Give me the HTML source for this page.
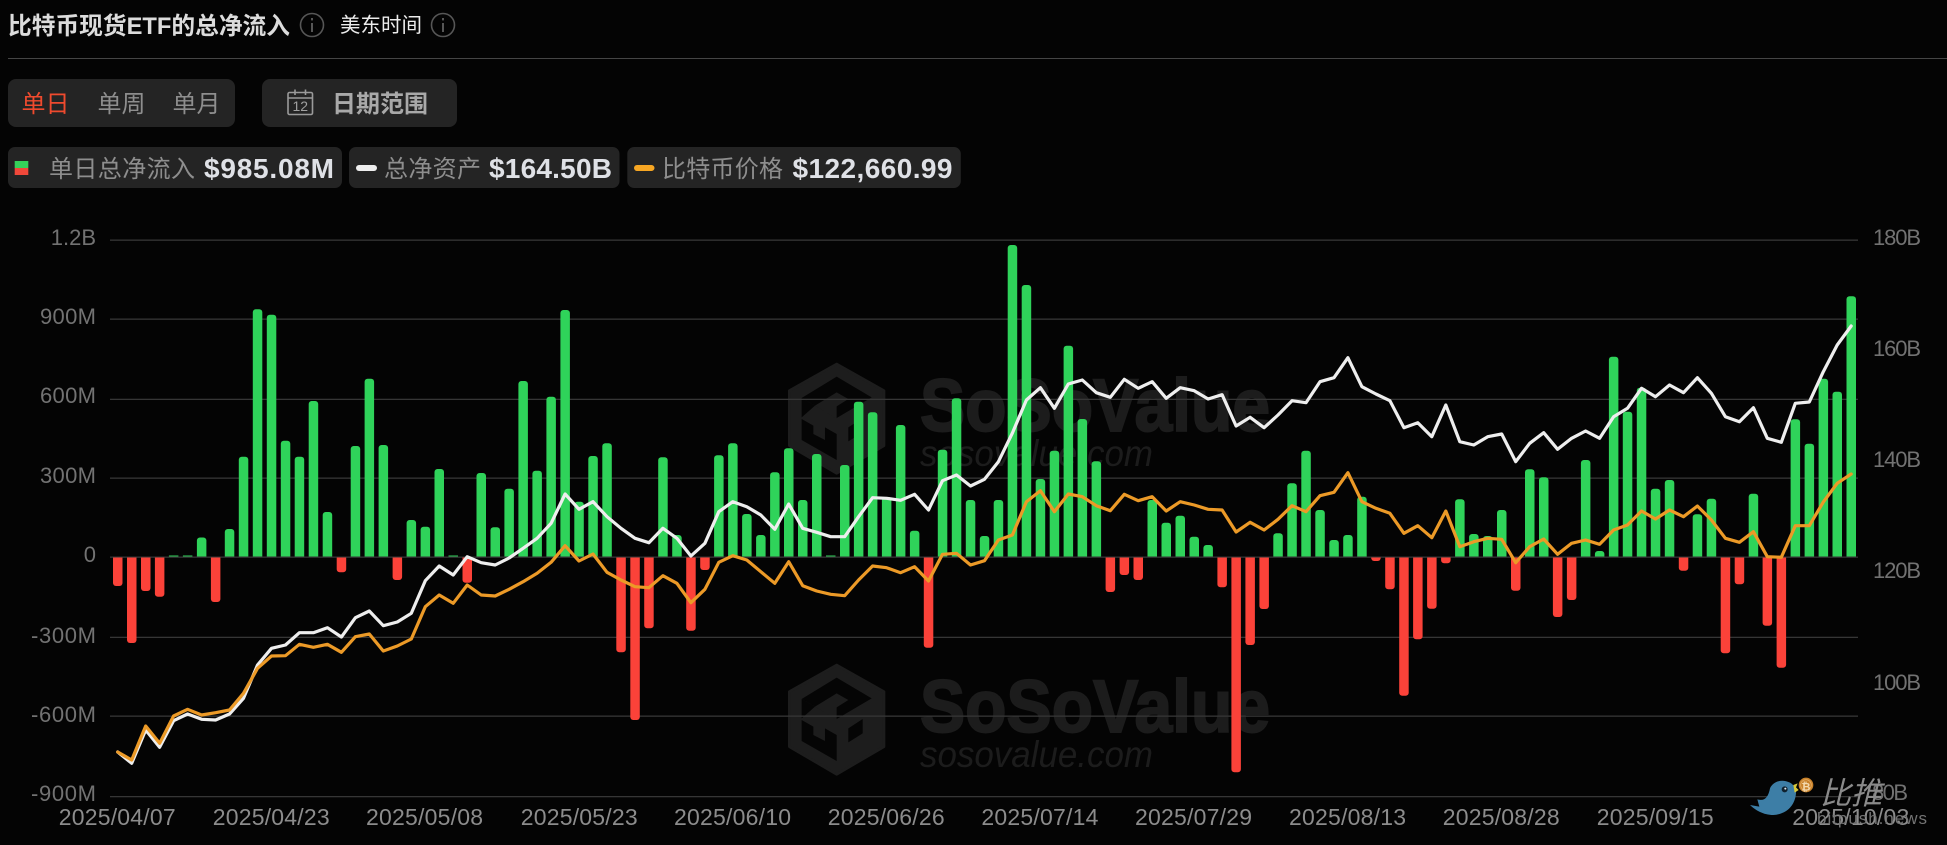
<!DOCTYPE html>
<html lang="zh">
<head>
<meta charset="utf-8">
<title>比特币现货ETF的总净流入</title>
<style>
html,body{margin:0;padding:0;background:#040404;width:1947px;height:845px;overflow:hidden}
svg{display:block}
text{font-family:"Liberation Sans","Noto Sans CJK SC",sans-serif}
.ax{fill:#727272;font-size:22px}
.dt{fill:#8c8c8c;font-size:23px}
.lb{fill:#8e8e8e;font-size:24px}
.val{fill:#dfe1e6;font-size:28px;font-weight:700}
</style>
</head>
<body>
<svg width="1947" height="845" viewBox="0 0 1947 845" xmlns="http://www.w3.org/2000/svg">
<defs>
<clipPath id="cg"><rect x="0" y="0" width="1947" height="556.5"/></clipPath>
<clipPath id="cr"><rect x="0" y="557.5" width="1947" height="290"/></clipPath>
<g id="wm">
<polygon points="170,30 312,110 312,275 170,358 28,275 28,110" fill="#1d1d1d" stroke="#1d1d1d" stroke-width="8" stroke-linejoin="round"/>
<polygon points="170,68 275,130 170,192 65,132" fill="#050505"/>
<polygon points="65,132 105,155 65,190" fill="#050505"/>
<polygon points="105,155 170,115 205,135 170,157 170,195" fill="#1d1d1d"/>
<polygon points="65,195 100,215 100,240 135,258 135,220 170,240 170,318 65,258" fill="#050505"/>
<polygon points="205,220 248,192 248,235 205,262" fill="#050505"/>
</g>
</defs>

<!-- header -->
<text x="8" y="34" font-size="24" font-weight="700" fill="#dcdcdc" textLength="282" lengthAdjust="spacingAndGlyphs">比特币现货ETF的总净流入</text>
<circle cx="312" cy="25" r="11.5" fill="none" stroke="#565656" stroke-width="1.6"/>
<rect x="311" y="23" width="2" height="9" fill="#565656"/><rect x="311" y="18" width="2" height="2.4" fill="#565656"/>
<text x="340" y="32" font-size="20.5" fill="#ececec">美东时间</text>
<circle cx="443" cy="25" r="11.5" fill="none" stroke="#565656" stroke-width="1.6"/>
<rect x="442" y="23" width="2" height="9" fill="#565656"/><rect x="442" y="18" width="2" height="2.4" fill="#565656"/>
<rect x="8" y="58" width="1939" height="1" fill="#454545"/>

<!-- tabs -->
<rect x="8" y="79" width="227" height="48" rx="8" fill="#242424"/>
<text x="21.5" y="112" font-size="24" fill="#ef4a2e">单日</text>
<text x="97.500" y="112" font-size="24" fill="#8e8e8e">单周</text>
<text x="172.500" y="112" font-size="24" fill="#8e8e8e">单月</text>
<rect x="262" y="79" width="195" height="48" rx="8" fill="#242424"/>
<rect x="288" y="92.500" width="24.500" height="22" rx="1.500" fill="none" stroke="#9a9a9a" stroke-width="1.600"/>
<path d="M288 98H312.500M295 89.500V95M305.500 89.500V95" fill="none" stroke="#9a9a9a" stroke-width="1.600"/>
<text x="300.300" y="111" font-size="14" fill="#a0a0a0" text-anchor="middle">12</text>
<text x="332" y="112" font-size="24" font-weight="700" fill="#a9a9a9">日期范围</text>

<!-- legend -->
<rect x="8" y="147" width="334" height="41" rx="7" fill="#242424"/>
<rect x="14.700" y="161" width="13.600" height="7" fill="#35d15a"/><rect x="14.700" y="168" width="13.600" height="7" fill="#f0483a"/>
<text class="lb" x="49" y="177" textLength="146">单日总净流入</text>
<text class="val" x="204" y="178" textLength="130" lengthAdjust="spacing">$985.08M</text>
<rect x="349" y="147" width="270.500" height="41" rx="7" fill="#242424"/>
<rect x="356" y="165" width="21" height="6" rx="3" fill="#eeeeee"/>
<text class="lb" x="384" y="177" textLength="97">总净资产</text>
<text class="val" x="489" y="178" textLength="123" lengthAdjust="spacing">$164.50B</text>
<rect x="627.300" y="147" width="333.500" height="41" rx="7" fill="#242424"/>
<rect x="634" y="165" width="20.500" height="6" rx="3" fill="#f6a623"/>
<text class="lb" x="662" y="177" textLength="121">比特币价格</text>
<text class="val" x="792.500" y="178" textLength="160" lengthAdjust="spacing">$122,660.99</text>

<!-- watermark -->
<use href="#wm" transform="translate(780,354) scale(.33333)"/>
<use href="#wm" transform="translate(780,655) scale(.33333)"/>
<g fill="#1c1c1c" stroke="#1c1c1c">
<text x="920" y="431" font-size="74" font-weight="700" stroke-width="2" textLength="350" lengthAdjust="spacingAndGlyphs">SoSoValue</text>
<text x="920" y="466" font-size="37" font-style="italic" stroke-width="0" textLength="233" lengthAdjust="spacingAndGlyphs">sosovalue.com</text>
<text x="920" y="732" font-size="74" font-weight="700" stroke-width="2" textLength="350" lengthAdjust="spacingAndGlyphs">SoSoValue</text>
<text x="920" y="767" font-size="37" font-style="italic" stroke-width="0" textLength="233" lengthAdjust="spacingAndGlyphs">sosovalue.com</text>
</g>

<!-- grid -->
<g fill="#363636">
<rect x="110" y="239.500" width="1748" height="1.300"/>
<rect x="110" y="318.500" width="1748" height="1.300"/>
<rect x="110" y="398.700" width="1748" height="1.300"/>
<rect x="110" y="477.500" width="1748" height="1.300"/>
<rect x="110" y="556.500" width="1748" height="1.300"/>
<rect x="110" y="636.700" width="1748" height="1.300"/>
<rect x="110" y="715.500" width="1748" height="1.300"/>
<rect x="110" y="796" width="1748" height="1.300"/>
</g>

<!-- y axes -->
<g class="ax" text-anchor="end">
<text x="96" y="245">1.2B</text>
<text x="96" y="324" textLength="56">900M</text>
<text x="96" y="403" textLength="56">600M</text>
<text x="96" y="483" textLength="56">300M</text>
<text x="96" y="562">0</text>
<text x="96" y="643" textLength="65">-300M</text>
<text x="96" y="722" textLength="65">-600M</text>
<text x="96" y="801" textLength="65">-900M</text>
</g>
<g class="ax">
<text x="1873" y="245" textLength="48">180B</text>
<text x="1873" y="356" textLength="48">160B</text>
<text x="1873" y="467" textLength="48">140B</text>
<text x="1873" y="578" textLength="48">120B</text>
<text x="1873" y="690" textLength="48">100B</text>
<text x="1872" y="800" textLength="36">80B</text>
</g>

<!-- x axis -->
<g class="dt">
<text x="58.700" y="825" textLength="117">2025/04/07</text>
<text x="212.700" y="825" textLength="117">2025/04/23</text>
<text x="366" y="825" textLength="117">2025/05/08</text>
<text x="520.700" y="825" textLength="117">2025/05/23</text>
<text x="674" y="825" textLength="117">2025/06/10</text>
<text x="827.700" y="825" textLength="117">2025/06/26</text>
<text x="981.400" y="825" textLength="117">2025/07/14</text>
<text x="1135" y="825" textLength="117">2025/07/29</text>
<text x="1289" y="825" textLength="117">2025/08/13</text>
<text x="1442.700" y="825" textLength="117">2025/08/28</text>
<text x="1596.700" y="825" textLength="117">2025/09/15</text>
<text x="1792.300" y="825" textLength="117">2025/10/03</text>
</g>

<!-- green bars -->
<g fill="#2fd35a" clip-path="url(#cg)">
<rect x="168.900" y="555.500" width="9.500" height="5.500"/>
<rect x="182.900" y="555.500" width="9.500" height="5.500"/>
<rect x="196.900" y="537.500" width="9.500" height="23.500" rx="3"/>
<rect x="224.800" y="529" width="9.500" height="32" rx="3"/>
<rect x="238.800" y="456.700" width="9.500" height="104.300" rx="3"/>
<rect x="252.800" y="309.300" width="9.500" height="251.700" rx="3"/>
<rect x="266.800" y="314.700" width="9.500" height="246.300" rx="3"/>
<rect x="280.800" y="440.700" width="9.500" height="120.300" rx="3"/>
<rect x="294.700" y="456.700" width="9.500" height="104.300" rx="3"/>
<rect x="308.700" y="401" width="9.500" height="160" rx="3"/>
<rect x="322.700" y="512" width="9.500" height="49" rx="3"/>
<rect x="350.700" y="446" width="9.500" height="115" rx="3"/>
<rect x="364.600" y="378.700" width="9.500" height="182.300" rx="3"/>
<rect x="378.600" y="445" width="9.500" height="116" rx="3"/>
<rect x="406.600" y="520" width="9.500" height="41" rx="3"/>
<rect x="420.600" y="526.700" width="9.500" height="34.300" rx="3"/>
<rect x="434.500" y="469" width="9.500" height="92" rx="3"/>
<rect x="448.500" y="555.500" width="9.500" height="5.500"/>
<rect x="476.500" y="473" width="9.500" height="88" rx="3"/>
<rect x="490.500" y="527.300" width="9.500" height="33.700" rx="3"/>
<rect x="504.400" y="488.700" width="9.500" height="72.300" rx="3"/>
<rect x="518.400" y="381" width="9.500" height="180" rx="3"/>
<rect x="532.400" y="470.700" width="9.500" height="90.300" rx="3"/>
<rect x="546.400" y="396.700" width="9.500" height="164.300" rx="3"/>
<rect x="560.400" y="310" width="9.500" height="251" rx="3"/>
<rect x="574.300" y="501.700" width="9.500" height="59.300" rx="3"/>
<rect x="588.300" y="456" width="9.500" height="105" rx="3"/>
<rect x="602.300" y="443.300" width="9.500" height="117.700" rx="3"/>
<rect x="658.200" y="457.300" width="9.500" height="103.700" rx="3"/>
<rect x="672.200" y="535" width="9.500" height="26" rx="3"/>
<rect x="714.100" y="455.300" width="9.500" height="105.700" rx="3"/>
<rect x="728.100" y="443.300" width="9.500" height="117.700" rx="3"/>
<rect x="742.100" y="514" width="9.500" height="47" rx="3"/>
<rect x="756.100" y="535" width="9.500" height="26" rx="3"/>
<rect x="770.100" y="472.300" width="9.500" height="88.700" rx="3"/>
<rect x="784" y="448.300" width="9.500" height="112.700" rx="3"/>
<rect x="798" y="500" width="9.500" height="61" rx="3"/>
<rect x="812" y="454" width="9.500" height="107" rx="3"/>
<rect x="826" y="555.500" width="9.500" height="5.500"/>
<rect x="840" y="465" width="9.500" height="96" rx="3"/>
<rect x="853.900" y="401.700" width="9.500" height="159.300" rx="3"/>
<rect x="867.900" y="412.300" width="9.500" height="148.700" rx="3"/>
<rect x="881.900" y="497" width="9.500" height="64" rx="3"/>
<rect x="895.900" y="425" width="9.500" height="136" rx="3"/>
<rect x="909.900" y="530.700" width="9.500" height="30.300" rx="3"/>
<rect x="937.800" y="449.700" width="9.500" height="111.300" rx="3"/>
<rect x="951.800" y="398.300" width="9.500" height="162.700" rx="3"/>
<rect x="965.800" y="500" width="9.500" height="61" rx="3"/>
<rect x="979.800" y="536" width="9.500" height="25" rx="3"/>
<rect x="993.700" y="500" width="9.500" height="61" rx="3"/>
<rect x="1007.700" y="245" width="9.500" height="316" rx="3"/>
<rect x="1021.700" y="285" width="9.500" height="276" rx="3"/>
<rect x="1035.700" y="479" width="9.500" height="82" rx="3"/>
<rect x="1049.700" y="450.700" width="9.500" height="110.300" rx="3"/>
<rect x="1063.600" y="345.700" width="9.500" height="215.300" rx="3"/>
<rect x="1077.600" y="419" width="9.500" height="142" rx="3"/>
<rect x="1091.600" y="461.300" width="9.500" height="99.700" rx="3"/>
<rect x="1147.500" y="500" width="9.500" height="61" rx="3"/>
<rect x="1161.500" y="522.700" width="9.500" height="38.300" rx="3"/>
<rect x="1175.500" y="515.700" width="9.500" height="45.300" rx="3"/>
<rect x="1189.500" y="536.700" width="9.500" height="24.300" rx="3"/>
<rect x="1203.400" y="545" width="9.500" height="16" rx="3"/>
<rect x="1273.300" y="533.300" width="9.500" height="27.700" rx="3"/>
<rect x="1287.300" y="483.300" width="9.500" height="77.700" rx="3"/>
<rect x="1301.300" y="450.700" width="9.500" height="110.300" rx="3"/>
<rect x="1315.300" y="510" width="9.500" height="51" rx="3"/>
<rect x="1329.300" y="540" width="9.500" height="21" rx="3"/>
<rect x="1343.200" y="535" width="9.500" height="26" rx="3"/>
<rect x="1357.200" y="496.700" width="9.500" height="64.300" rx="3"/>
<rect x="1455.100" y="499.300" width="9.500" height="61.700" rx="3"/>
<rect x="1469.100" y="534" width="9.500" height="27" rx="3"/>
<rect x="1483" y="536" width="9.500" height="25" rx="3"/>
<rect x="1497" y="510" width="9.500" height="51" rx="3"/>
<rect x="1525" y="469.300" width="9.500" height="91.700" rx="3"/>
<rect x="1539" y="477.300" width="9.500" height="83.700" rx="3"/>
<rect x="1580.900" y="460" width="9.500" height="101" rx="3"/>
<rect x="1594.900" y="551" width="9.500" height="10" rx="3"/>
<rect x="1608.900" y="356.700" width="9.500" height="204.300" rx="3"/>
<rect x="1622.800" y="411.700" width="9.500" height="149.300" rx="3"/>
<rect x="1636.800" y="387.700" width="9.500" height="173.300" rx="3"/>
<rect x="1650.800" y="488.700" width="9.500" height="72.300" rx="3"/>
<rect x="1664.800" y="480" width="9.500" height="81" rx="3"/>
<rect x="1692.700" y="514.300" width="9.500" height="46.700" rx="3"/>
<rect x="1706.700" y="498.700" width="9.500" height="62.300" rx="3"/>
<rect x="1748.700" y="493.700" width="9.500" height="67.300" rx="3"/>
<rect x="1790.600" y="419.300" width="9.500" height="141.700" rx="3"/>
<rect x="1804.600" y="443.700" width="9.500" height="117.300" rx="3"/>
<rect x="1818.600" y="378.700" width="9.500" height="182.300" rx="3"/>
<rect x="1832.500" y="391.700" width="9.500" height="169.300" rx="3"/>
<rect x="1846.500" y="296.300" width="9.500" height="264.700" rx="3"/>
</g>

<!-- red bars -->
<g fill="#fb4239" clip-path="url(#cr)">
<rect x="113" y="553" width="9.500" height="33" rx="3"/>
<rect x="127" y="553" width="9.500" height="90" rx="3"/>
<rect x="141" y="553" width="9.500" height="38" rx="3"/>
<rect x="154.900" y="553" width="9.500" height="43.700" rx="3"/>
<rect x="210.900" y="553" width="9.500" height="49" rx="3"/>
<rect x="336.700" y="553" width="9.500" height="19.300" rx="3"/>
<rect x="392.600" y="553" width="9.500" height="27" rx="3"/>
<rect x="462.500" y="553" width="9.500" height="29.700" rx="3"/>
<rect x="616.300" y="553" width="9.500" height="99.300" rx="3"/>
<rect x="630.300" y="553" width="9.500" height="167" rx="3"/>
<rect x="644.200" y="553" width="9.500" height="75.300" rx="3"/>
<rect x="686.200" y="553" width="9.500" height="77.700" rx="3"/>
<rect x="700.200" y="553" width="9.500" height="17" rx="3"/>
<rect x="923.800" y="553" width="9.500" height="94.700" rx="3"/>
<rect x="1105.600" y="553" width="9.500" height="39" rx="3"/>
<rect x="1119.600" y="553" width="9.500" height="22" rx="3"/>
<rect x="1133.500" y="553" width="9.500" height="27" rx="3"/>
<rect x="1217.400" y="553" width="9.500" height="34.300" rx="3"/>
<rect x="1231.400" y="553" width="9.500" height="219.300" rx="3"/>
<rect x="1245.400" y="553" width="9.500" height="92" rx="3"/>
<rect x="1259.400" y="553" width="9.500" height="56" rx="3"/>
<rect x="1371.200" y="553" width="9.500" height="8" rx="3"/>
<rect x="1385.200" y="553" width="9.500" height="36.300" rx="3"/>
<rect x="1399.200" y="553" width="9.500" height="142.700" rx="3"/>
<rect x="1413.100" y="553" width="9.500" height="86.300" rx="3"/>
<rect x="1427.100" y="553" width="9.500" height="55.700" rx="3"/>
<rect x="1441.100" y="553" width="9.500" height="10.300" rx="3"/>
<rect x="1511" y="553" width="9.500" height="37.700" rx="3"/>
<rect x="1552.900" y="553" width="9.500" height="64" rx="3"/>
<rect x="1566.900" y="553" width="9.500" height="47" rx="3"/>
<rect x="1678.800" y="553" width="9.500" height="17.700" rx="3"/>
<rect x="1720.700" y="553" width="9.500" height="100.300" rx="3"/>
<rect x="1734.700" y="553" width="9.500" height="31.300" rx="3"/>
<rect x="1762.600" y="553" width="9.500" height="72.700" rx="3"/>
<rect x="1776.600" y="553" width="9.500" height="114.700" rx="3"/>
</g>

<!-- total net assets -->
<polyline fill="none" stroke="#eeeeee" stroke-width="3.200" stroke-linejoin="round" stroke-linecap="round" points="117.700,752 131.700,763.300 145.700,730 159.600,747.300 173.600,720.700 187.600,714 201.600,719.300 215.600,720 229.500,714 243.500,698.300 257.500,665 271.500,648.300 285.500,645 299.400,632.700 313.400,632.700 327.400,627.700 341.400,637 355.400,617.700 369.300,611 383.300,625.700 397.300,622 411.300,613.300 425.300,580.700 439.200,566 453.200,575 467.200,556.700 481.200,562.700 495.200,565 509.100,558 523.100,548.300 537.100,538.300 551.100,523.300 565.100,494 579,509.300 593,501.700 607,516.700 621,528.300 635,538.300 648.900,542.700 662.900,528.300 676.900,538.300 690.900,556 704.900,543.300 718.800,511.700 732.800,501.700 746.800,506.700 760.800,515 774.800,529.300 788.700,504 802.700,528.300 816.700,532.300 830.700,536.700 844.700,536.700 858.600,516.700 872.600,497.700 886.600,498.300 900.600,500.300 914.600,494.300 928.500,510 942.500,480.700 956.500,475 970.500,486 984.500,479.300 998.400,461.700 1012.400,433 1026.400,400 1040.400,387.700 1054.400,408.300 1068.300,384 1082.300,380 1096.300,392.700 1110.300,397.300 1124.300,379.300 1138.200,388.300 1152.200,381.700 1166.200,398.300 1180.200,387.700 1194.200,390.700 1208.100,399 1222.100,394.700 1236.100,426 1250.100,417.300 1264.100,427.700 1278,415 1292,400.700 1306,402.700 1320,381.700 1334,377.700 1347.900,357.700 1361.900,386.700 1375.900,394 1389.900,400.700 1403.900,427.700 1417.800,422.700 1431.800,436.700 1445.800,405 1459.800,441.700 1473.800,445 1487.700,436.700 1501.700,434 1515.700,461.700 1529.700,443.300 1543.700,432.700 1557.600,449.300 1571.600,438.300 1585.600,431 1599.600,438.300 1613.600,416.700 1627.500,408.300 1641.500,388.300 1655.500,396.700 1669.500,385 1683.500,392.700 1697.400,377.700 1711.400,393.300 1725.400,416.700 1739.400,421.700 1753.400,407.700 1767.300,438.300 1781.300,442.300 1795.300,403.300 1809.300,402 1823.300,371.700 1837.200,345 1851.200,326"/>

<!-- BTC price -->
<polyline fill="none" stroke="#ec9a27" stroke-width="3.200" stroke-linejoin="round" stroke-linecap="round" points="117.700,752 131.700,760 145.700,726 159.600,743.300 173.600,716 187.600,709.300 201.600,715 215.600,712.700 229.500,710 243.500,693.300 257.500,668.300 271.500,656 285.500,655.700 299.400,644.300 313.400,647.300 327.400,644.300 341.400,652.300 355.400,636.700 369.300,634 383.300,651 397.300,646 411.300,639 425.300,606.700 439.200,595 453.200,603.300 467.200,585 481.200,595 495.200,596 509.100,589.300 523.100,581.700 537.100,573.300 551.100,562.300 565.100,545.700 579,561 593,554 607,572.300 621,580 635,586.700 648.900,587.700 662.900,575.700 676.900,583.300 690.900,602.700 704.900,589.300 718.800,562.300 732.800,555.700 746.800,560 760.800,571.700 774.800,583.300 788.700,561.700 802.700,585.700 816.700,591 830.700,594.300 844.700,595.700 858.600,580 872.600,566 886.600,567.700 900.600,572.700 914.600,566.700 928.500,581 942.500,554.300 956.500,553.300 970.500,565 984.500,560.700 998.400,540 1012.400,535 1026.400,501.700 1040.400,490.700 1054.400,511.700 1068.300,494 1082.300,496.700 1096.300,505.700 1110.300,510.700 1124.300,494.300 1138.200,500.700 1152.200,496.700 1166.200,511 1180.200,501.700 1194.200,505 1208.100,509.300 1222.100,510 1236.100,532 1250.100,522.300 1264.100,530 1278,519.300 1292,505.700 1306,511.700 1320,495.700 1334,492.300 1347.900,472.700 1361.900,501.700 1375.900,508.300 1389.900,513.300 1403.900,533.300 1417.800,525.700 1431.800,537.700 1445.800,511 1459.800,546.700 1473.800,541.700 1487.700,538.300 1501.700,539.300 1515.700,562.700 1529.700,546.700 1543.700,539 1557.600,554.300 1571.600,543.300 1585.600,540 1599.600,544.300 1613.600,530 1627.500,525 1641.500,511 1655.500,519 1669.500,510 1683.500,516.700 1697.400,506 1711.400,520 1725.400,538.300 1739.400,542.300 1753.400,531.700 1767.300,556.700 1781.300,557.300 1795.300,525.700 1809.300,525.700 1823.300,502 1837.200,483.300 1851.200,474"/>

<!-- bitpush watermark -->
<g transform="translate(1700,740) scale(.33333)">
<path d="M150,195 L178,200 L172,178 C195,185 205,170 210,145 C218,125 245,115 270,128 C282,135 288,145 288,160 C285,195 262,222 220,225 C190,225 165,210 150,195 Z" fill="#3d7ea6"/>
<polygon points="280,135 293,130 288,142 296,150 284,158" fill="#d9c93a"/>
<circle cx="254" cy="148" r="9" fill="#10222e"/><circle cx="256" cy="146" r="3" fill="#dfe8ee"/>
<circle cx="318" cy="135" r="22" fill="#c9822a"/>
<circle cx="318" cy="135" r="16" fill="none" stroke="#e6b06a" stroke-width="2"/>
</g>
<text x="1806" y="790.500" font-size="11" font-weight="700" fill="#f3d9ae" text-anchor="middle">₿</text>
<text x="1820" y="804" font-size="31" font-style="italic" fill="#8a8a8a">比推</text>
<text x="1817" y="824" font-size="17" fill="#747474" textLength="110">bitpush.news</text>
</svg>
</body>
</html>
